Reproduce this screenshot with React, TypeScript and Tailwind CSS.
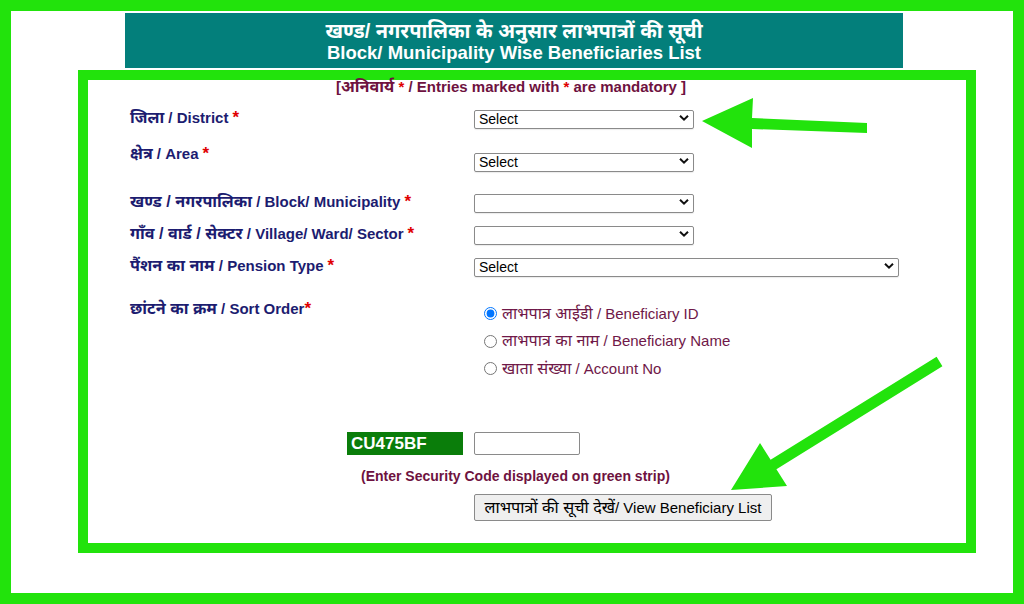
import React from "react";

const FONT = '"Liberation Sans", Arial, "Noto Sans Devanagari", "Lohit Devanagari", "Noto Sans", sans-serif';

// Devanagari runs are set a touch larger so they sit level with the Latin text
function Hi({ children }: { children: React.ReactNode }) {
  return <span className="text-[1.08em] leading-none">{children}</span>;
}

function Star() {
  return <span className="text-[#e00000] text-[17px] leading-none ml-[4px]">*</span>;
}

function Chevron() {
  return (
    <svg
      className="absolute right-[5px] top-1/2 -translate-y-1/2 pointer-events-none"
      width="10"
      height="7"
      viewBox="0 0 10 7"
      fill="none"
    >
      <polyline points="1,1.2 5,5.2 9,1.2" stroke="#111" strokeWidth="2" strokeLinejoin="miter" />
    </svg>
  );
}

function Dropdown({ width, value }: { width: string; value?: string }) {
  return (
    <div className={`relative h-[19px] ${width}`}>
      <select
        defaultValue={value ?? ""}
        className="appearance-none w-full h-full border border-[#8a8a8a] rounded-[2px] bg-white text-[14px] font-normal leading-[17px] text-black pl-[4px] pr-[18px] shadow-[0_1px_1px_rgba(0,0,0,0.08)]"
        style={{ fontFamily: FONT }}
      >
        <option value={value ?? ""}>{value ?? ""}</option>
      </select>
      <Chevron />
    </div>
  );
}

function Radio({ hi, en, checked }: { hi: string; en: string; checked?: boolean }) {
  return (
    <label className="flex items-center h-[27.5px] text-[15px] text-[#6f1848]">
      <input
        type="radio"
        name="sort"
        defaultChecked={checked}
        className="w-[13px] h-[13px] m-0 ml-[9.5px] mr-[5.5px] accent-[#0075ff]"
      />
      <span>
        <Hi>{hi}</Hi> / {en}
      </span>
    </label>
  );
}

function Arrows() {
  return (
    <svg
      className="absolute left-0 top-0 pointer-events-none"
      width="1024"
      height="604"
      viewBox="0 0 1024 604"
    >
      <polygon
        points="702,121 753,98 752,118 867,123 867,133 752,129 752,148"
        fill="#22e30c"
      />
      <polygon
        points="731,490 760,443 770.6,459.8 936.6,356.8 942.4,366.2 776.4,469.2 787,486"
        fill="#22e30c"
      />
    </svg>
  );
}

export default function App() {
  return (
    <div
      className="relative w-[1024px] h-[604px] border-[11px] border-[#22e30c] bg-white overflow-hidden"
      style={{ fontFamily: FONT }}
    >
      {/* title band */}
      <div className="ml-[114px] mt-[2px] w-[778px] h-[55px] bg-[#037f7b] text-white text-center font-bold text-[18.5px] leading-[21px] pt-[8px]">
        <div className="h-[21px]">
          <Hi>खण्ड/ नगरपालिका के अनुसार लाभपात्रों की सूची</Hi>
        </div>
        <div className="h-[21px]">Block/ Municipality Wise Beneficiaries List</div>
      </div>

      {/* form panel */}
      <div className="ml-[67px] mt-[2px] w-[898px] h-[483px] border-[10px] border-[#22e30c]">
        <div className="w-[846px] h-[16px] text-center text-[15px] font-bold leading-[16px] -mt-[2px] text-[#6e1240]">
          [<Hi>अनिवार्य</Hi> <span className="text-[#e00000]">*</span> / Entries marked with{" "}
          <span className="text-[#e00000]">*</span> are mandatory ]
        </div>

        <div className="pl-[42px] text-[15px] font-bold text-[#1c1c70]">
          <div className="flex items-center h-[19px] mt-[14px]">
            <div className="w-[344px] h-[18px] leading-[18px]">
              <Hi>जिला</Hi> / District
              <Star />
            </div>
            <Dropdown width="w-[220px]" value="Select" />
          </div>

          <div className="flex h-[25px] mt-[18px]">
            <div className="w-[344px] h-[18px] leading-[18px] self-start">
              <Hi>क्षेत्र</Hi> / Area
              <Star />
            </div>
            <div className="self-end">
              <Dropdown width="w-[220px]" value="Select" />
            </div>
          </div>

          <div className="flex items-center h-[19px] mt-[22px]">
            <div className="w-[344px] h-[18px] leading-[18px]">
              <Hi>खण्ड / नगरपालिका</Hi> / Block/ Municipality
              <Star />
            </div>
            <Dropdown width="w-[220px]" />
          </div>

          <div className="flex items-center h-[19px] mt-[13px]">
            <div className="w-[344px] h-[18px] leading-[18px]">
              <Hi>गाँव / वार्ड / सेक्टर</Hi> / Village/ Ward/ Sector
              <Star />
            </div>
            <Dropdown width="w-[220px]" />
          </div>

          <div className="flex items-center h-[19px] mt-[13px]">
            <div className="w-[344px] h-[18px] leading-[18px]">
              <Hi>पैंशन का नाम</Hi> / Pension Type
              <Star />
            </div>
            <Dropdown width="w-[425px]" value="Select" />
          </div>

          <div className="flex mt-[25px]">
            <div className="w-[344px] h-[18px] leading-[18px]">
              <Hi>छांटने का क्रम</Hi> / Sort Order
              <span className="text-[#e00000] text-[17px] leading-none">*</span>
            </div>
            <div className="flex flex-col font-normal">
              <Radio hi="लाभपात्र आईडी" en="Beneficiary ID" checked />
              <Radio hi="लाभपात्र का नाम" en="Beneficiary Name" />
              <Radio hi="खाता संख्या" en="Account No" />
            </div>
          </div>

          <div className="flex items-center h-[23px] mt-[49.5px] ml-[217px]">
            <div className="w-[116px] h-[23px] bg-[#0a7d0a] text-white font-bold text-[17px] leading-[23px] pl-[4px]">
              CU475BF
            </div>
            <input
              type="text"
              className="ml-[11px] w-[106px] h-[23px] border border-[#8a8a8a] rounded-[2px] bg-white"
            />
          </div>

          <div className="ml-[231px] mt-[13px] h-[16px] text-[14px] leading-[16px] text-[#6e1240]">
            (Enter Security Code displayed on green strip)
          </div>

          <button
            type="button"
            className="ml-[344px] mt-[10px] w-[298px] h-[27px] bg-[#efefef] border border-[#8a8a8a] rounded-[2px] text-[15px] font-normal text-black leading-[25px]"
            style={{ fontFamily: FONT }}
          >
            <Hi>लाभपात्रों की सूची देखें</Hi>/ View Beneficiary List
          </button>
        </div>
      </div>

      <div className="absolute -left-[11px] -top-[11px]">
        <Arrows />
      </div>
    </div>
  );
}
